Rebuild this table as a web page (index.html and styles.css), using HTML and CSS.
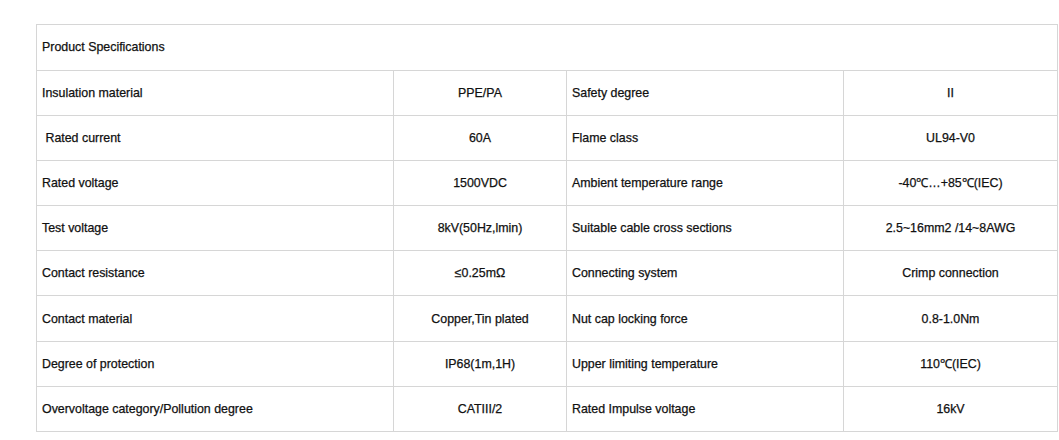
FILE: index.html
```html
<!DOCTYPE html>
<html>
<head>
<meta charset="utf-8">
<link rel="stylesheet" href="styles.css">
</head>
<body>
<div class="wrap">
<table class="spec">
  <colgroup>
    <col class="c1"><col class="c2"><col class="c3"><col class="c4">
  </colgroup>
  <tr><td colspan="4" class="title">Product Specifications</td></tr>
  <tr><td>Insulation material</td><td class="v">PPE/PA</td><td>Safety degree</td><td class="v">II</td></tr>
  <tr><td>&nbsp;Rated current</td><td class="v">60A</td><td>Flame class</td><td class="v">UL94-V0</td></tr>
  <tr><td>Rated voltage</td><td class="v">1500VDC</td><td>Ambient temperature range</td><td class="v">-40℃…+85℃(IEC)</td></tr>
  <tr><td>Test voltage</td><td class="v">8kV(50Hz,lmin)</td><td>Suitable cable cross sections</td><td class="v">2.5~16mm2 /14~8AWG</td></tr>
  <tr><td>Contact resistance</td><td class="v">≤0.25mΩ</td><td>Connecting system</td><td class="v">Crimp connection</td></tr>
  <tr><td>Contact material</td><td class="v">Copper,Tin plated</td><td>Nut cap locking force</td><td class="v">0.8-1.0Nm</td></tr>
  <tr><td>Degree of protection</td><td class="v">IP68(1m,1H)</td><td>Upper limiting temperature</td><td class="v">110℃(IEC)</td></tr>
  <tr><td>Overvoltage category/Pollution degree</td><td class="v">CATIII/2</td><td>Rated Impulse voltage</td><td class="v">16kV</td></tr>
</table>
</div>
</body>
</html>
```
FILE: styles.css
```css
html, body {
  margin: 0;
  padding: 0;
  background: #ffffff;
}
.wrap {
  padding: 24px 0 0 36px;
}
.spec {
  border-collapse: collapse;
  table-layout: fixed;
  width: 1021px;
  font-family: "Liberation Sans", Arial, sans-serif;
  font-size: 12.4px;
  color: #111111;
  -webkit-text-stroke: 0.25px #111111;
}
.c1 { width: 357px; }
.c2 { width: 173px; }
.c3 { width: 277px; }
.c4 { width: 214px; }
.spec td {
  border: 1px solid #d6d6d6;
  height: 45.2px;
  padding: 0 5px;
  box-sizing: border-box;
  vertical-align: middle;
  white-space: nowrap;
  line-height: 14px;
}
.spec td.v {
  text-align: center;
}
.spec td.title {
  height: 45.5px;
}
```
